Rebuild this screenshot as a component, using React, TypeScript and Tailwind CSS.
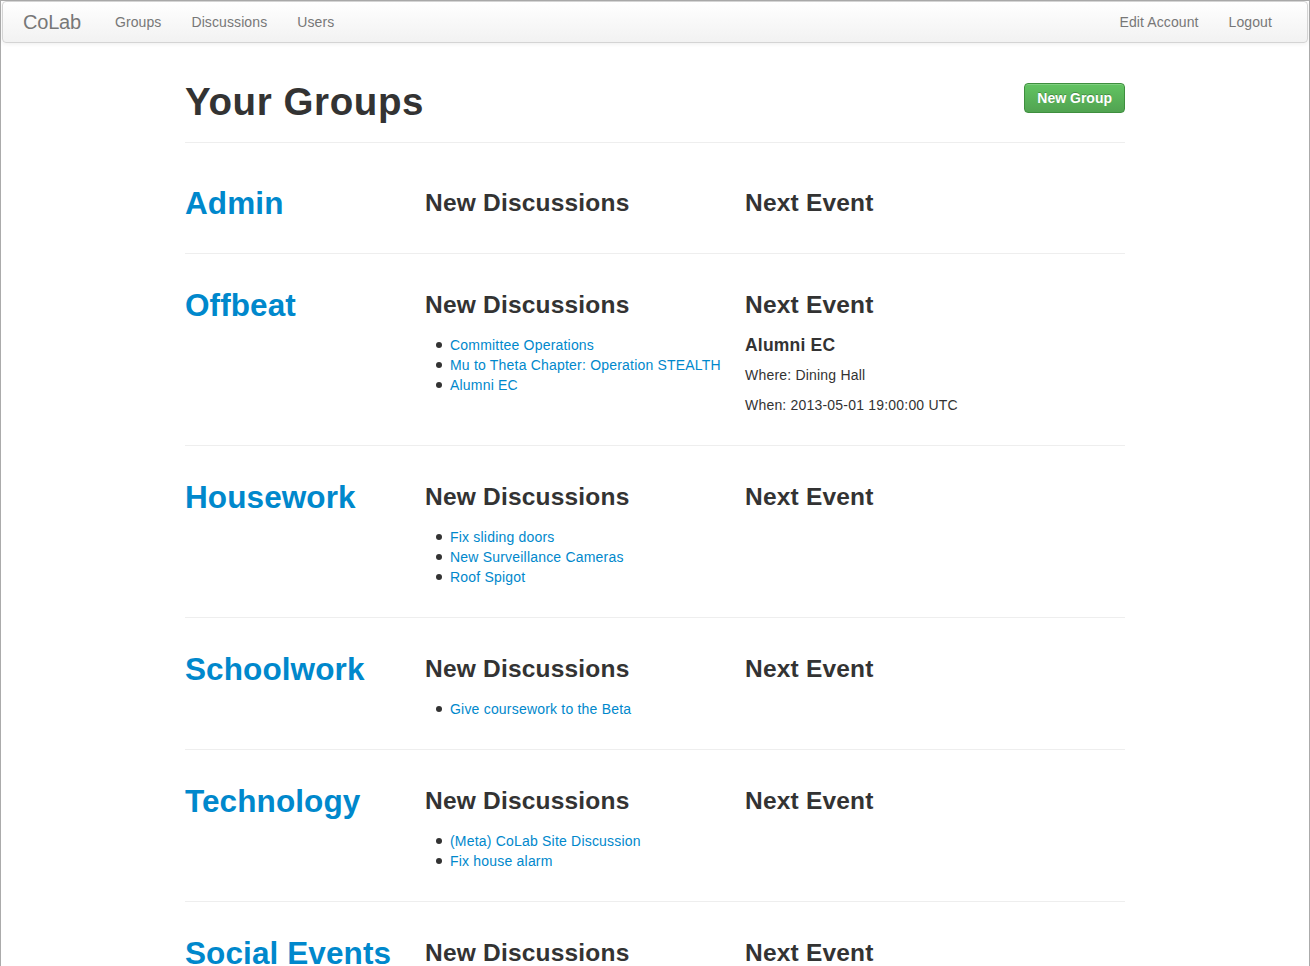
import React from "react";

type Group = {
  name: string;
  discussions: string[];
  event?: { title: string; where: string; when: string };
};

const groups: Group[] = [
  { name: "Admin", discussions: [] },
  {
    name: "Offbeat",
    discussions: ["Committee Operations", "Mu to Theta Chapter: Operation STEALTH", "Alumni EC"],
    event: { title: "Alumni EC", where: "Where: Dining Hall", when: "When: 2013-05-01 19:00:00 UTC" },
  },
  { name: "Housework", discussions: ["Fix sliding doors", "New Surveillance Cameras", "Roof Spigot"] },
  { name: "Schoolwork", discussions: ["Give coursework to the Beta"] },
  { name: "Technology", discussions: ["(Meta) CoLab Site Discussion", "Fix house alarm"] },
  { name: "Social Events", discussions: ["Party planning"] },
];

export default function App() {
  return (
    <div
      className="min-h-screen bg-white text-[#333] text-[14px] leading-[20px] tracking-[0.2px] border-l border-r border-t border-[#ababab]"
      style={{ fontFamily: '"Liberation Sans", Arial, Helvetica, sans-serif' }}
    >
      <div className="mx-[1px] h-[42px] rounded-[4px] border border-[#d4d4d4] bg-gradient-to-b from-white to-[#f2f2f2] shadow-[0_1px_4px_rgba(0,0,0,0.065)] flex items-center justify-between pr-[20px] tracking-[0.1px]">
        <div className="flex items-center">
          <span className="pl-[20px] pr-[19px] text-[20px] font-light text-[#777] leading-[20px] tracking-[-0.2px]">CoLab</span>
          <nav className="flex">
            <a className="px-[15px] text-[#777]">Groups</a>
            <a className="px-[15px] text-[#777]">Discussions</a>
            <a className="px-[15px] text-[#777]">Users</a>
          </nav>
        </div>
        <nav className="flex">
          <a className="px-[15px] text-[#777]">Edit Account</a>
          <a className="px-[15px] text-[#777]">Logout</a>
        </nav>
      </div>

      <div className="w-[940px] mx-auto">
        <div className="pt-[39px] pb-[20px] border-b border-[#eee] flex justify-between items-start">
          <h1 className="text-[38.5px] font-bold leading-[40px] text-[#333] tracking-[0.6px]">Your Groups</h1>
          <button className="mt-[1px] h-[30px] px-[12px] rounded-[4px] border border-[#3e8f3e] bg-gradient-to-b from-[#62c462] to-[#51a351] text-white font-bold text-[14px] leading-[20px] tracking-normal shadow-[inset_0_1px_0_rgba(255,255,255,0.2)] [text-shadow:0_-1px_0_rgba(0,0,0,0.25)]">
            New Group
          </button>
        </div>

        {groups.map((g, i) => (
          <section
            key={g.name}
            className={`${i === 0 ? "pt-[40px]" : "pt-[31px]"} pb-[30px] border-b border-[#eee] flex gap-[20px]`}
          >
            <div className="w-[220px] shrink-0">
              <h2 className="text-[31.5px] font-bold leading-[40px] text-[#0088cc] tracking-[0.1px]">{g.name}</h2>
            </div>
            <div className="w-[300px] shrink-0">
              <h3 className="text-[24.5px] font-bold leading-[40px] tracking-[0.2px]">New Discussions</h3>
              {g.discussions.length > 0 && (
                <ul className="mt-[10px] pl-[11px]">
                  {g.discussions.map((d) => (
                    <li key={d} className="leading-[20px] flex items-center">
                      <span className="w-[6px] h-[6px] rounded-full bg-[#333] mr-[8px] shrink-0" />
                      <a className="text-[#0088cc] whitespace-nowrap">{d}</a>
                    </li>
                  ))}
                </ul>
              )}
            </div>
            <div className="w-[380px] shrink-0">
              <h3 className="text-[24.5px] font-bold leading-[40px] tracking-[0.2px]">Next Event</h3>
              {g.event && (
                <>
                  <h4 className="mt-[10px] text-[17.5px] font-bold leading-[20px] tracking-[0.2px]">{g.event.title}</h4>
                  <p className="mt-[10px]">{g.event.where}</p>
                  <p className="mt-[10px]">{g.event.when}</p>
                </>
              )}
            </div>
          </section>
        ))}
      </div>
    </div>
  );
}
